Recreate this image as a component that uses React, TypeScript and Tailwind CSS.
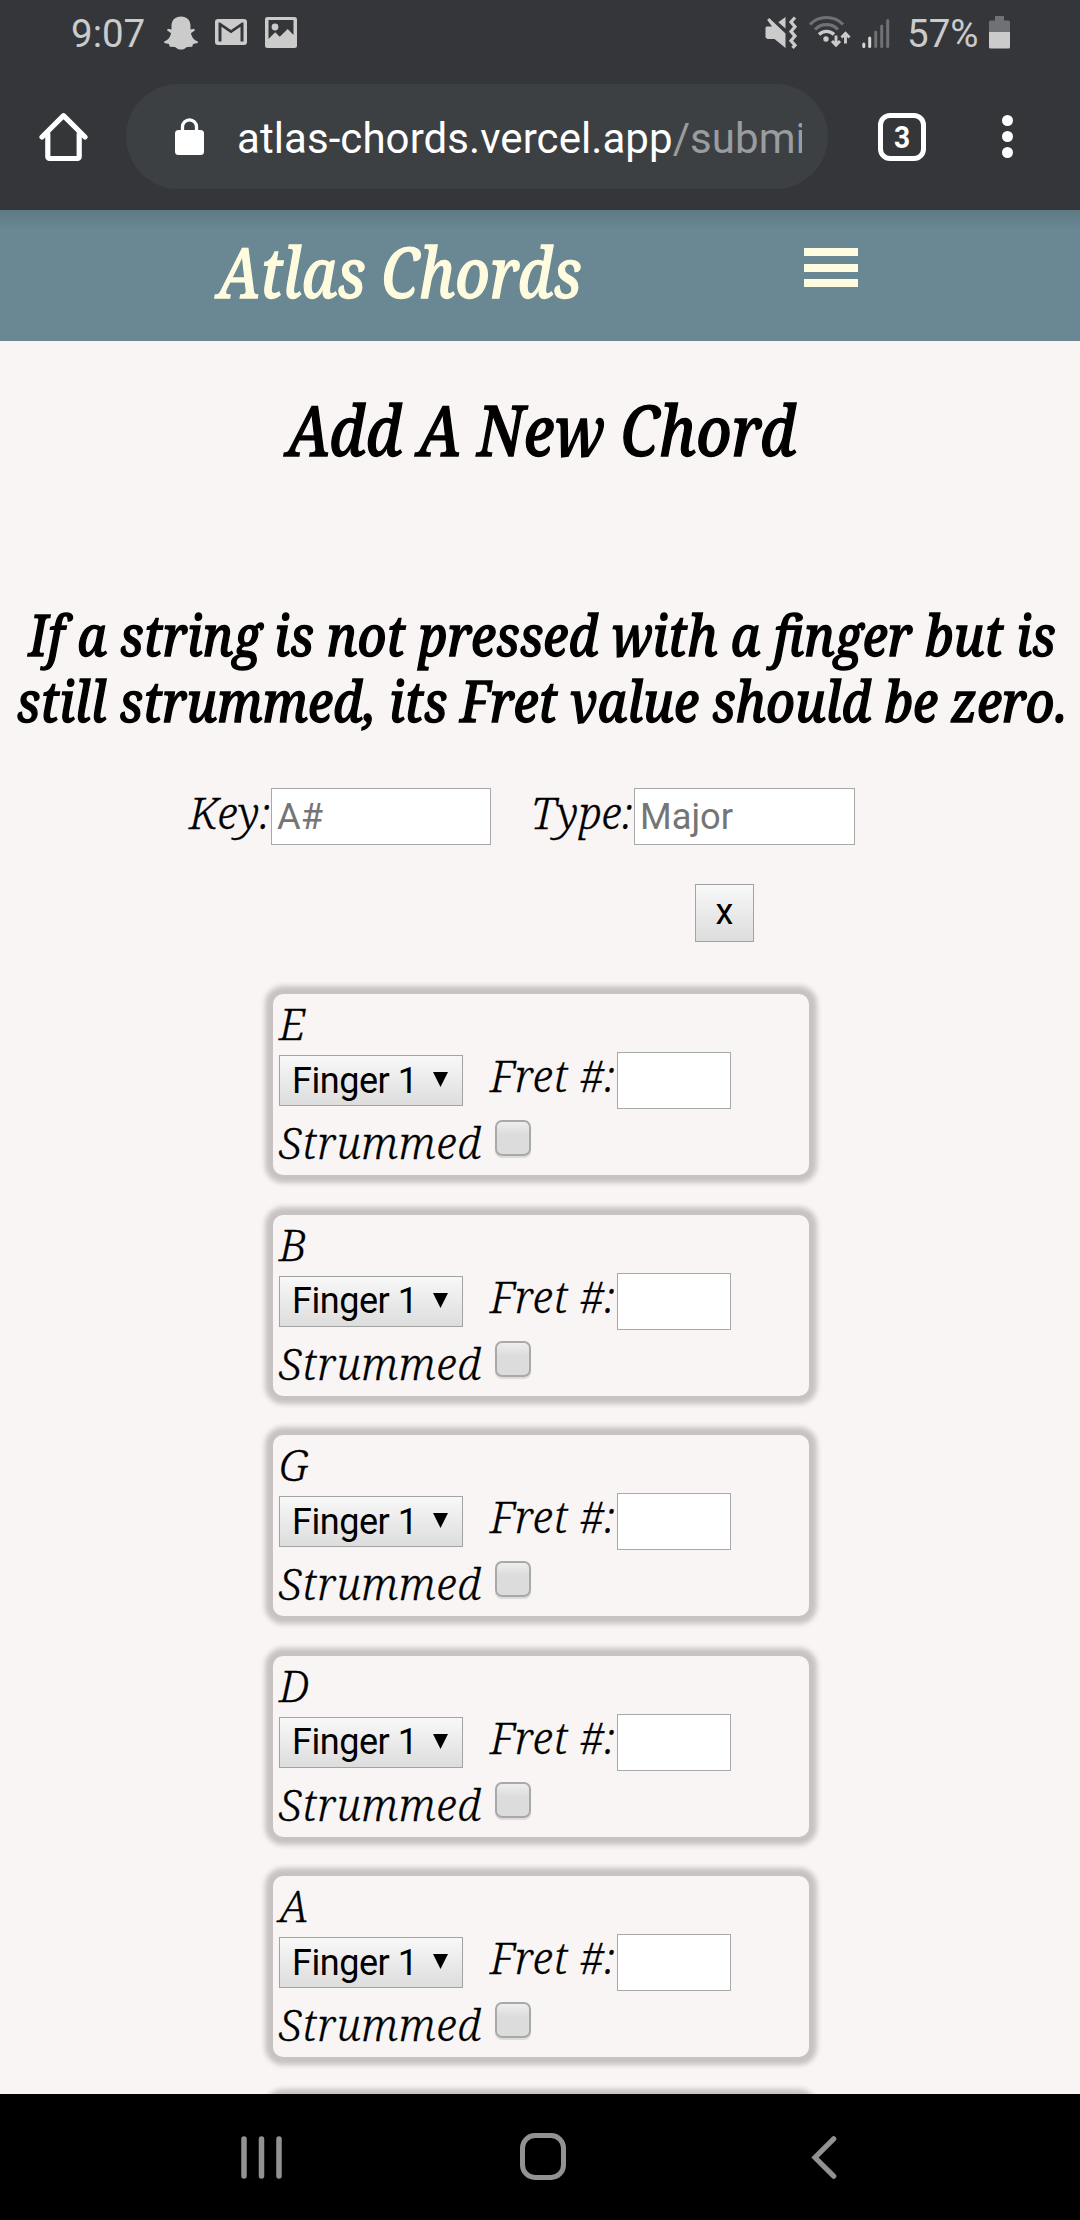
import type { ReactNode } from "react";

const strings = ["E", "B", "G", "D", "A"];

function StatusBar() {
  return (
    <div className="flex h-[68px] items-center justify-between pl-[71px] pr-[70px] text-[38.5px] leading-none text-[#cbcbcb]">
      <div className="flex items-center">
        <span className="w-[93px]">9:07</span>
        <svg className="mt-[-3px]" width="34" height="34" viewBox="0 0 34 34" fill="currentColor">
          <path d="M17 .5c5.700 0 9.500 3.700 9.500 9.200v3.700l3.600-.7.900 1.600-4.100 2.900c.8 4.100 3.200 6.800 6.900 8.400v1.500l-4.700 1-.9 2.600-5.200.2c-2 1.700-3.700 2.600-6 2.600s-4-.9-6-2.600l-5.200-.2-.9-2.600-4.700-1v-1.500c3.700-1.600 6.100-4.300 6.900-8.400L3 14.300l.9-1.600 3.600.7V9.700C7.500 4.200 11.300.5 17 .5z" />
        </svg>
        <svg className="ml-[17px] mt-[-4px]" width="32" height="26" viewBox="0 0 32 26" fill="currentColor">
          <path fillRule="evenodd" d="M3 0h26a3 3 0 0 1 3 3v20a3 3 0 0 1-3 3H3a3 3 0 0 1-3-3V3a3 3 0 0 1 3-3zM3.500 3.500V22.500H6.500V7.800L16 14.300 25.500 7.800V22.500H28.500V3.500H27L16 11 5 3.500z" />
        </svg>
        <svg className="ml-[18px] mt-[-4px]" width="32" height="31" viewBox="0 0 32 31" fill="currentColor">
          <path fillRule="evenodd" d="M2.500 0h27A2.500 2.500 0 0 1 32 2.500v26a2.500 2.500 0 0 1-2.500 2.500h-27A2.500 2.500 0 0 1 0 28.500v-26A2.500 2.500 0 0 1 2.500 0zM3.500 3v19l6.700-6.700 4.500 4.500 8-7.800 5.800 6V3z" />
          <circle cx="10" cy="10" r="3.400" />
        </svg>
      </div>
      <div className="flex items-center">
        <svg className="mt-[-4px]" width="33" height="33" viewBox="0 0 33 33" fill="currentColor">
          <path d="M1.500 10.500H7L2.200 4 4.200 2 20.500 17.500V32L9.500 23H2.500L.5 21.500V11.500zM13.300 6.200 20.500 1v11.500z" />
          <path d="M30 1.500 26 6l4 4.700-4 4.700 4 4.700-4 4.600 4 4.600-2.500 2.600" fill="none" stroke="currentColor" strokeWidth="3.200" />
        </svg>
        <svg className="ml-[10px] mt-[-6px]" width="44" height="34" viewBox="0 0 44 34" fill="none" stroke="currentColor">
          <path d="M2 10.500A23 23 0 0 1 35 10.500" stroke="#707174" strokeWidth="3.200" />
          <path d="M7 15.500A16 16 0 0 1 30 15.500" stroke="#707174" strokeWidth="3.200" />
          <path d="M11 20.500A10.500 10.500 0 0 1 26 20.500" strokeWidth="3.400" />
          <circle cx="18" cy="25" r="2.700" fill="currentColor" stroke="none" />
          <path d="M28 21.500V31M24 27l4 4.200 4-4.200M37.500 29.500V19M33.500 23.500l4-4.200 4 4.200" strokeWidth="2.900" />
        </svg>
        <svg className="ml-[10px] mt-[-1px]" width="28" height="31" viewBox="0 0 28 31" fill="none" strokeWidth="3" strokeLinecap="round">
          <path d="M1.800 26v2.500M7.700 20v8.500" stroke="#d6d6d6" />
          <path d="M13.700 14v14.500M19.700 8v20.500M25.700 2.500v26" stroke="#707174" />
        </svg>
        <span className="ml-[17px] w-[72px]">57%</span>
        <svg className="ml-[10px] mt-[-4px]" width="21" height="33" viewBox="0 0 21 33">
          <path d="M6 0h9v4.500h4.500A1.500 1.500 0 0 1 21 6v11H0V6A1.500 1.500 0 0 1 1.500 4.500H6z" fill="#707174" />
          <path d="M0 16h21v15a1.500 1.500 0 0 1-1.500 1.500h-18A1.500 1.500 0 0 1 0 31z" fill="#cbcbcb" />
        </svg>
      </div>
    </div>
  );
}

function AddressBar() {
  return (
    <div className="flex h-[142px] items-start pl-[39px] pt-4 text-white">
      <svg className="mt-[28px]" width="49" height="50" viewBox="0 0 49 50" fill="none" stroke="currentColor" strokeWidth="5.200" strokeLinejoin="round" strokeLinecap="round">
        <path d="M3 25 24.500 3.700 46 25" />
        <path d="M8.800 22v22.800a1.700 1.700 0 0 0 1.700 1.700h28a1.700 1.700 0 0 0 1.700-1.700V22" />
      </svg>
      <div className="ml-[38px] flex h-[105px] w-[702px] items-center rounded-full bg-[#3c4043] pl-[49px] pr-[26px]">
        <svg className="mt-[-1px] shrink-0" width="29" height="37" viewBox="0 0 29 37">
          <rect y="12" width="29" height="25" rx="3.500" fill="currentColor" />
          <path d="M7.500 13V8.800a7 7 0 0 1 14 0V13" fill="none" stroke="currentColor" strokeWidth="3.300" />
        </svg>
        <div className="ml-[33px] mt-1 flex-1 overflow-hidden whitespace-nowrap text-[42px] leading-[56px] tracking-[.07px]">
          atlas-chords.vercel.app<span className="text-[#9a9c9e]">/submi</span>
        </div>
      </div>
      <div className="ml-[50px] mt-[29px] flex h-12 w-[48px] items-center justify-center rounded-[12px] border-[5px] border-white">
        <span className="block scale-x-[.88] text-[32px] font-bold leading-none">3</span>
      </div>
      <div className="ml-[76px] mt-[31px] flex flex-col gap-[5px]">
        <i className="size-[11px] rounded-full bg-white" />
        <i className="size-[11px] rounded-full bg-white" />
        <i className="size-[11px] rounded-full bg-white" />
      </div>
    </div>
  );
}

function Label({ children, className = "" }: { children: ReactNode; className?: string }) {
  return (
    <span className={`block whitespace-nowrap font-['Noto_Serif','Liberation_Serif',serif] text-[43.4px] font-light italic leading-[56px] [-webkit-text-stroke:.3px_currentColor] ${className}`}>
      {children}
    </span>
  );
}

function Heading({ children, className = "" }: { children: ReactNode; className?: string }) {
  return (
    <div className={`flex justify-center whitespace-nowrap pl-[4px] font-['Noto_Serif','Liberation_Serif',serif] font-medium italic [-webkit-text-stroke:1.4px_currentColor] ${className}`}>
      <span className="block shrink-0 scale-x-[.864]">{children}</span>
    </div>
  );
}

function StringCard({ name }: { name: string }) {
  return (
    <div className="h-[181px] w-[536px] shrink-0 rounded-[10px] pl-[6px] pt-[2px] shadow-[0_0_5.5px_8px_#c8c3c2]">
      <Label className="h-[52px]">{name}</Label>
      <div className="flex h-[67px] items-start">
        <div className="mt-[7px] flex h-[51px] w-[184px] items-center border border-[#a3a3a3] bg-linear-to-b from-[#f8f8f8] to-[#dddddd] pl-[12px] text-[36px] leading-none tracking-[-.45px]">
          <span className="w-[141px] whitespace-nowrap">Finger 1</span>
          <svg className="mt-[-2px]" width="15" height="15" viewBox="0 0 15 15">
            <path d="M0 0h15L7.500 15z" />
          </svg>
        </div>
        <Label className="ml-[27px] w-[127px] tracking-[.3px]">Fret #:</Label>
        <div className="mt-[4px] h-[57px] w-[114px] border border-[#a9a9a9] bg-white" />
      </div>
      <div className="flex items-start">
        <Label className="w-[216px] tracking-[.8px]">Strummed</Label>
        <div className="mt-[5px] size-[36px] rounded-[7px] border-2 border-[#a9a9a9] bg-linear-to-b from-[#eeeeee] to-[#dcdcdc] to-40% shadow-[0_2px_1px_#dedada]" />
      </div>
    </div>
  );
}

export default function App() {
  return (
    <div className="flex h-[2220px] w-[1080px] flex-col overflow-hidden bg-[#f9f5f4] font-[Roboto,sans-serif] text-black">
      <div className="shrink-0 bg-[#35363a]">
        <StatusBar />
        <AddressBar />
      </div>
      <main className="flex h-[1884px] shrink-0 flex-col overflow-hidden">
        <header className="flex h-[131px] shrink-0 items-start bg-[#698894] bg-linear-to-b from-[#5f7a84] to-[#698894] to-[20px] pl-[218px] pt-[21px] text-[#fffbde]">
          <h1 className="w-[586px] origin-left scale-x-[.845] whitespace-nowrap font-['Noto_Serif','Liberation_Serif',serif] text-[70px] font-medium italic leading-[80px] [-webkit-text-stroke:1.4px_currentColor]">
            Atlas Chords
          </h1>
          <div className="mt-[17px] flex flex-col gap-[7.500px]">
            <i className="h-2 w-[54px] bg-current" />
            <i className="h-2 w-[54px] bg-current" />
            <i className="h-2 w-[54px] bg-current" />
          </div>
        </header>
        <Heading className="mt-[48px] text-[70px] leading-[80px]">Add A New Chord</Heading>
        <Heading className="mt-[132px] text-[57.4px] leading-[66px]">If a string is not pressed with a finger but is</Heading>
        <Heading className="text-[57.4px] leading-[66px]">still strummed, its Fret value should be zero.</Heading>
        <div className="mt-[52px] flex h-[60px] items-start pl-[189px] text-[36.3px] leading-[55px] text-[#757575]">
          <Label className="w-[82px] text-black">Key:</Label>
          <div className="mt-[3px] h-[57px] w-[220px] border border-[#a9a9a9] bg-white pl-[5px]">A#</div>
          <Label className="ml-[40px] w-[103px] text-black">Type:</Label>
          <div className="mt-[3px] h-[57px] w-[221px] border border-[#a9a9a9] bg-white pl-[5px]">Major</div>
        </div>
        <div className="ml-[695px] mt-[39px] flex h-[58px] w-[59px] shrink-0 items-center justify-center border border-[#a3a3a3] bg-linear-to-b from-[#f8f8f8] to-[#dddddd] pb-[2px] text-[36px] leading-none">
          x
        </div>
        <div className="ml-[273px] mt-[52px] flex flex-col gap-[39.5px]">
          {strings.map((name) => (
            <StringCard key={name} name={name} />
          ))}
          <div className="h-[181px] w-[536px] shrink-0 rounded-[10px] shadow-[0_0_5.5px_8px_#c8c3c2]" />
        </div>
      </main>
      <nav className="flex h-[126px] shrink-0 items-start bg-black pl-[241px] pt-[39px] text-[#929292]">
        <svg className="mt-[3px]" width="41" height="43" viewBox="0 0 41 43" stroke="currentColor" strokeWidth="5.500" strokeLinecap="round">
          <path d="M3 3v37M20.500 3v37M38 3v37" />
        </svg>
        <div className="ml-[238px] h-[47px] w-[46px] rounded-[15px] border-[5.500px] border-current" />
        <svg className="ml-[245px] mt-[3px]" width="26" height="43" viewBox="0 0 26 43" fill="none" stroke="currentColor" strokeWidth="5.200" strokeLinecap="round">
          <path d="M22.700 2.800 4 21.500 22.700 40.200" />
        </svg>
      </nav>
    </div>
  );
}
